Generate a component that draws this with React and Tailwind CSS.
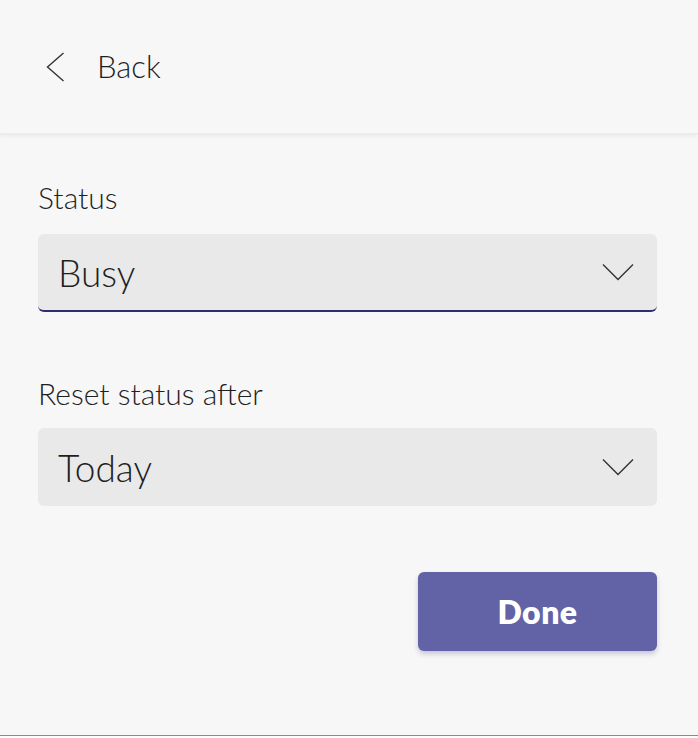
function ChevronDownThin() {
  return (
    <svg width="32" height="18" viewBox="0 0 32 18" fill="none" stroke="#333" strokeWidth="1.4">
      <polyline points="1,1.5 16,16.5 31,1.5" />
    </svg>
  );
}

function ChevronLeftThin() {
  return (
    <svg width="19" height="30" viewBox="0 0 19 30" fill="none" stroke="#333" strokeWidth="1.4">
      <polyline points="17.5,1 1.5,15 17.5,29" />
    </svg>
  );
}

function Select({ value, active }) {
  return (
    <button
      className={`flex h-[78px] w-full items-center justify-between rounded-[6px] bg-[#e9e9e9] pl-5 pr-[23px] text-left ${
        active ? 'border-b-2 border-[#2e2f6e]' : ''
      }`}
    >
      <span className="text-[37px] font-light leading-none text-[#1f1f1f]">{value}</span>
      <ChevronDownThin />
    </button>
  );
}

export default function App() {
  return (
    <div className="h-[738px] w-[698px] bg-white font-['Lato','Liberation_Sans',sans-serif]">
      <div className="flex h-[736px] flex-col border-b border-[#8a8a8a] bg-[#f7f7f7]">
        {/* Header */}
        <div className="flex h-[135px] items-center gap-[32px] border-b-2 border-[#ececec] pl-[46px] shadow-[0_2px_3px_rgba(0,0,0,0.04)]">
          <ChevronLeftThin />
          <span className="text-[31px] font-light leading-none text-[#1f1f1f]">Back</span>
        </div>

        {/* Body */}
        <div className="flex flex-col pl-[38px] pr-[41px] pt-[44px]">
          <label className="text-[30px] font-light leading-[36px] text-[#1f1f1f]">Status</label>
          <div className="mt-[19px]">
            <Select value="Busy" active />
          </div>

          <label className="mt-[63px] text-[30px] font-light leading-[36px] text-[#1f1f1f]">Reset status after</label>
          <div className="mt-[17px]">
            <Select value="Today" />
          </div>

          <div className="mt-[66px] flex justify-end">
            <button className="h-[79px] w-[239px] rounded-[6px] bg-[#6163a6] text-[32px] font-extrabold tracking-[0.5px] text-white shadow-[0_3px_5px_rgba(60,60,120,0.25)]">
              Done
            </button>
          </div>
        </div>
      </div>
    </div>
  );
}
